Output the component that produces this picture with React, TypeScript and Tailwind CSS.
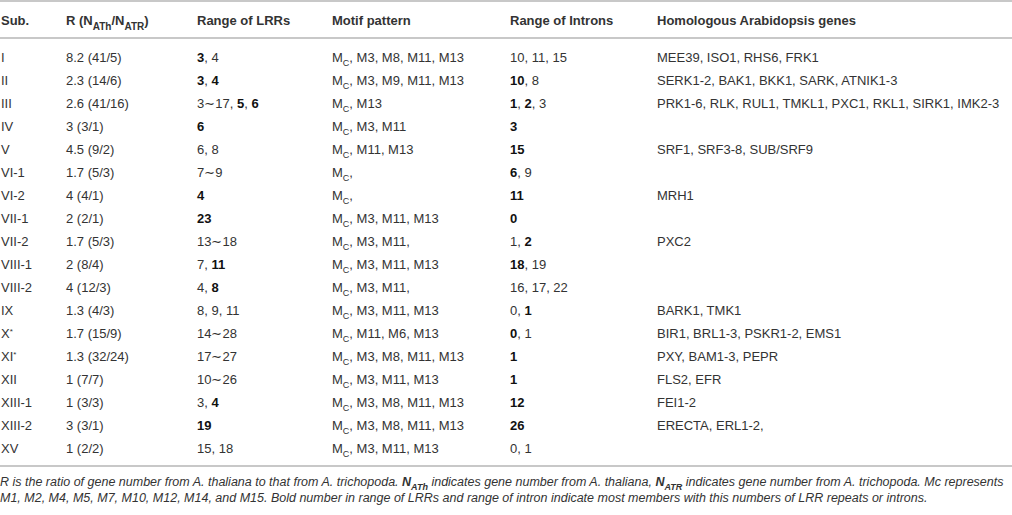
import type { ReactNode } from 'react';

type Row = { sub: ReactNode; r: string; lrr: ReactNode; motif: string; intron: ReactNode; genes: string };

const B = ({ children }: { children: ReactNode }) => <b className="font-bold text-[#111]">{children}</b>;

const Mc = () => (
  <>
    M<sub className="text-[9px] leading-none align-[-2px]">C</sub>
  </>
);

const rows: Row[] = [
  { sub: 'I', r: '8.2 (41/5)', lrr: <><B>3</B>, 4</>, motif: ', M3, M8, M11, M13', intron: '10, 11, 15', genes: 'MEE39, ISO1, RHS6, FRK1' },
  { sub: 'II', r: '2.3 (14/6)', lrr: <><B>3</B>, <B>4</B></>, motif: ', M3, M9, M11, M13', intron: <><B>10</B>, 8</>, genes: 'SERK1-2, BAK1, BKK1, SARK, ATNIK1-3' },
  { sub: 'III', r: '2.6 (41/16)', lrr: <>3∼17, <B>5</B>, <B>6</B></>, motif: ', M13', intron: <><B>1</B>, <B>2</B>, 3</>, genes: 'PRK1-6, RLK, RUL1, TMKL1, PXC1, RKL1, SIRK1, IMK2-3' },
  { sub: 'IV', r: '3 (3/1)', lrr: <B>6</B>, motif: ', M3, M11', intron: <B>3</B>, genes: '' },
  { sub: 'V', r: '4.5 (9/2)', lrr: '6, 8', motif: ', M11, M13', intron: <B>15</B>, genes: 'SRF1, SRF3-8, SUB/SRF9' },
  { sub: 'VI-1', r: '1.7 (5/3)', lrr: '7∼9', motif: ',', intron: <><B>6</B>, 9</>, genes: '' },
  { sub: 'VI-2', r: '4 (4/1)', lrr: <B>4</B>, motif: ',', intron: <B>11</B>, genes: 'MRH1' },
  { sub: 'VII-1', r: '2 (2/1)', lrr: <B>23</B>, motif: ', M3, M11, M13', intron: <B>0</B>, genes: '' },
  { sub: 'VII-2', r: '1.7 (5/3)', lrr: '13∼18', motif: ', M3, M11,', intron: <>1, <B>2</B></>, genes: 'PXC2' },
  { sub: 'VIII-1', r: '2 (8/4)', lrr: <>7, <B>11</B></>, motif: ', M3, M11, M13', intron: <><B>18</B>, 19</>, genes: '' },
  { sub: 'VIII-2', r: '4 (12/3)', lrr: <>4, <B>8</B></>, motif: ', M3, M11,', intron: '16, 17, 22', genes: '' },
  { sub: 'IX', r: '1.3 (4/3)', lrr: '8, 9, 11', motif: ', M3, M11, M13', intron: <>0, <B>1</B></>, genes: 'BARK1, TMK1' },
  { sub: <>X<sup className="text-[8px] leading-none">*</sup></>, r: '1.7 (15/9)', lrr: '14∼28', motif: ', M11, M6, M13', intron: <><B>0</B>, 1</>, genes: 'BIR1, BRL1-3, PSKR1-2, EMS1' },
  { sub: <>XI<sup className="text-[8px] leading-none">*</sup></>, r: '1.3 (32/24)', lrr: '17∼27', motif: ', M3, M8, M11, M13', intron: <B>1</B>, genes: 'PXY, BAM1-3, PEPR' },
  { sub: 'XII', r: '1 (7/7)', lrr: '10∼26', motif: ', M3, M11, M13', intron: <B>1</B>, genes: 'FLS2, EFR' },
  { sub: 'XIII-1', r: '1 (3/3)', lrr: <>3, <B>4</B></>, motif: ', M3, M8, M11, M13', intron: <B>12</B>, genes: 'FEI1-2' },
  { sub: 'XIII-2', r: '3 (3/1)', lrr: <B>19</B>, motif: ', M3, M8, M11, M13', intron: <B>26</B>, genes: 'ERECTA, ERL1-2,' },
  { sub: 'XV', r: '1 (2/2)', lrr: '15, 18', motif: ', M3, M11, M13', intron: '0, 1', genes: '' },
];

export default function App() {
  return (
    <div className="w-[1012px] h-[515px] bg-white text-[#333] font-['Liberation_Sans',Arial,sans-serif] overflow-hidden">
      <table className="w-full border-collapse text-[13px] leading-[23px] table-fixed">
        <colgroup>
          <col className="w-[66px]" />
          <col className="w-[131px]" />
          <col className="w-[135px]" />
          <col className="w-[178px]" />
          <col className="w-[147px]" />
          <col />
        </colgroup>
        <thead>
          <tr className="border-t-2 border-b-2 border-[#c8c8c8] h-[37px]">
            <th className="text-left font-bold pl-px pt-px">Sub.</th>
            <th className="text-left font-bold pt-px">
              R (N<sub className="text-[10px] leading-none align-[-3px]">ATh</sub>/N<sub className="text-[10px] leading-none align-[-3px]">ATR</sub>)
            </th>
            <th className="text-left font-bold pt-px">Range of LRRs</th>
            <th className="text-left font-bold pt-px">Motif pattern</th>
            <th className="text-left font-bold pt-px">Range of Introns</th>
            <th className="text-left font-bold pt-px">Homologous Arabidopsis genes</th>
          </tr>
        </thead>
        <tbody>
          <tr className="h-[8px]"><td colSpan={6} /></tr>
          {rows.map((row, i) => (
            <tr key={i} className="h-[23px] whitespace-nowrap">
              <td className="pl-px">{row.sub}</td>
              <td>{row.r}</td>
              <td>{row.lrr}</td>
              <td><Mc />{row.motif}</td>
              <td>{row.intron}</td>
              <td>{row.genes}</td>
            </tr>
          ))}
          <tr className="h-[6px] border-b-2 border-[#c8c8c8]"><td colSpan={6} /></tr>
        </tbody>
      </table>
      <p className="italic text-[12.5px] leading-[16px] text-[#333] pt-[7px] pr-1">
        R is the ratio of gene number from A. thaliana to that from A. trichopoda.{' '}
        <b className="font-bold">N<sub className="text-[9px] leading-none align-[-2px]">ATh</sub></b> indicates gene number from A. thaliana,{' '}
        <b className="font-bold">N<sub className="text-[9px] leading-none align-[-2px]">ATR</sub></b> indicates gene number from A. trichopoda. Mc represents M1, M2, M4, M5, M7, M10, M12, M14, and M15. Bold number in range of LRRs and range of intron indicate most members with this numbers of LRR repeats or introns.
      </p>
    </div>
  );
}
